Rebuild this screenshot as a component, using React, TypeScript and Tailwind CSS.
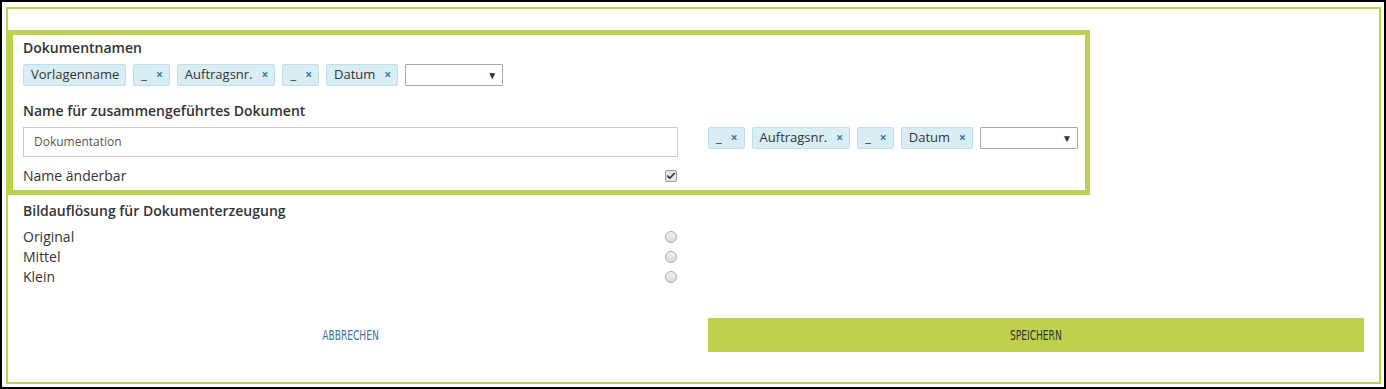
import { Check } from "lucide-react";

// Platzhalter-Bausteine für den Dateinamen
const nameTags = [
  { label: "Vorlagenname", removable: false },
  { label: "_", removable: true },
  { label: "Auftragsnr.", removable: true },
  { label: "_", removable: true },
  { label: "Datum", removable: true },
];

const mergedTags = nameTags.slice(1);

const resolutions = ["Original", "Mittel", "Klein"];

const font = { fontFamily: "'Open Sans', 'Liberation Sans', sans-serif" };
const condensed = { fontFamily: "'DejaVu Sans', sans-serif" };

function Tag({ label, removable }: { label: string; removable: boolean }) {
  return (
    <span className="flex h-[22px] shrink-0 items-center gap-[9px] rounded-[2px] border border-[#bfe0ea] bg-[#d9eef4] pl-[7px] pr-[6px] text-[13px] text-[#333]">
      <span>{label}</span>
      {removable && <span className="text-[12px] font-bold leading-none text-[#3a78b4]">×</span>}
    </span>
  );
}

function Select() {
  return (
    <div className="flex h-[22px] w-[98px] shrink-0 items-center justify-end rounded-[1px] border border-[#a9a9a9] bg-white pr-[5px] text-[10px] text-[#333]">
      ▼
    </div>
  );
}

function TagRow({ tags }: { tags: typeof nameTags }) {
  return (
    <div className="flex items-center gap-[7px]">
      {tags.map((t, i) => (
        <Tag key={i} label={t.label} removable={t.removable} />
      ))}
      <Select />
    </div>
  );
}

export default function App() {
  return (
    <div className="h-[389px] w-[1386px] border-2 border-black bg-white p-[4px] pt-[5px] pr-[3px]" style={font}>
      <div className="flex h-[377px] flex-col border-2 border-[#bfd04f] pt-[21px]">
        {/* Hervorgehobener Bereich */}
        <div className="w-[1082px] border-[5px] border-[#bfd04f] pl-[10px] pt-[3px] pb-[4px]">
          <div className="h-[20px] text-[14px] font-semibold leading-[20px] text-[#333]">Dokumentnamen</div>
          <div className="mt-[6px]">
            <TagRow tags={nameTags} />
          </div>
          <div className="mt-[15px] h-[20px] text-[14px] font-semibold leading-[20px] text-[#333]">
            Name für zusammengeführtes Dokument
          </div>
          <div className="mt-[6px] flex items-start gap-[30px]">
            <div className="w-[655px] shrink-0">
              <div className="flex h-[30px] items-center border border-[#ccc] px-[10px] text-[12px] text-[#555]">
                Dokumentation
              </div>
              <div className="mt-[9px] flex h-[20px] items-center justify-between text-[14px] text-[#333]">
                <span className="-mt-px">Name änderbar</span>
                <span className="mr-[1px] flex h-[12px] w-[12px] items-center justify-center rounded-[2px] border border-[#999] bg-[#e6e6e6]">
                  <Check size={10} strokeWidth={4} className="text-[#333]" />
                </span>
              </div>
            </div>
            <TagRow tags={mergedTags} />
          </div>
        </div>

        {/* Bildauflösung */}
        <div className="px-[15px]">
          <div className="mt-[6px] h-[20px] text-[14px] font-semibold leading-[20px] text-[#333]">
            Bildauflösung für Dokumenterzeugung
          </div>
          <div className="mt-[6px] w-[655px]">
            {resolutions.map((r) => (
              <div key={r} className="flex h-[20px] items-center justify-between text-[14px] text-[#333]">
                <span className="-mt-[2px]">{r}</span>
                <span className="mr-[1px] h-[12px] w-[12px] rounded-full border border-[#aaa] bg-gradient-to-b from-[#f2f2f2] to-[#d9d9d9]" />
              </div>
            ))}
          </div>

          <div className="mt-[31px] flex gap-[30px]">
            <button
              className="flex h-[34px] w-[655px] items-center justify-center text-[14px] text-[#3b75a4]"
              style={condensed}
            >
              <span className="inline-block scale-x-[0.65]">ABBRECHEN</span>
            </button>
            <button
              className="flex h-[34px] w-[656px] items-center justify-center bg-[#bfd04f] text-[14px] text-[#333]"
              style={condensed}
            >
              <span className="inline-block scale-x-[0.65]">SPEICHERN</span>
            </button>
          </div>
        </div>
      </div>
    </div>
  );
}
